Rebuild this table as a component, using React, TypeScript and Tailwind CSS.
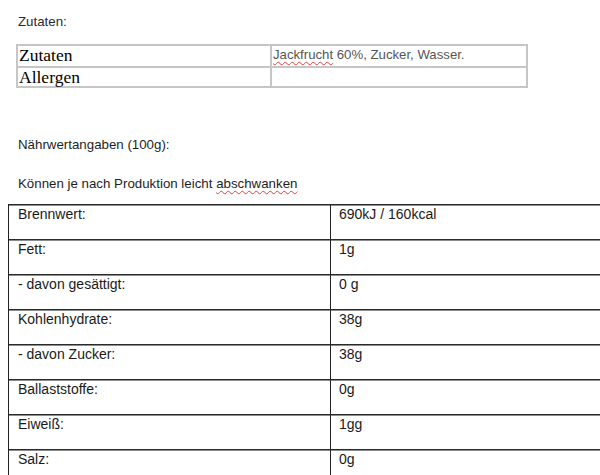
const naehrwerte = [
  { label: "Brennwert:", value: "690kJ / 160kcal" },
  { label: "Fett:", value: "1g" },
  { label: "- davon gesättigt:", value: "0 g" },
  { label: "Kohlenhydrate:", value: "38g" },
  { label: "- davon Zucker:", value: "38g" },
  { label: "Ballaststoffe:", value: "0g" },
  { label: "Eiweiß:", value: "1gg" },
  { label: "Salz:", value: "0g" },
];

const arial = "font-['Liberation_Sans',Arial,sans-serif]";
const times = "font-['Liberation_Serif','Times_New_Roman',serif]";

export default function App() {
  return (
    <div className={`w-[600px] h-[475px] bg-white overflow-hidden ${arial}`}>
      <p className="pl-[18px] pt-[14px] text-[13.3px] leading-[16px] text-[#2b2b2b]">Zutaten:</p>

      {/* Zutaten / Allergen */}
      <div className="ml-[16px] mt-[14px] w-[512px] border-2 border-[#c6c6c6]">
        <div className="grid grid-cols-[254px_1fr] h-[20px]">
          <div className={`${times} text-[17.5px] leading-[18px] text-black pl-[1px] border-r-2 border-[#c6c6c6]`}>
            Zutaten
          </div>
          <div className="text-[13.2px] leading-[18px] text-[#555] pl-[1px]">
            <span className="underline decoration-wavy decoration-[#e04040] decoration-1 underline-offset-2">Jackfrucht</span> 60%, Zucker, Wasser.
          </div>
        </div>
        <div className="grid grid-cols-[254px_1fr] h-[20px] border-t-2 border-[#c6c6c6]">
          <div className={`${times} text-[17.5px] leading-[18px] text-black pl-[1px] border-r-2 border-[#c6c6c6]`}>
            Allergen
          </div>
          <div />
        </div>
      </div>

      <p className="pl-[18px] mt-[49px] text-[13.3px] leading-[16px] text-[#1e1e1e]">Nährwertangaben (100g):</p>
      <p className="pl-[18px] mt-[23px] text-[13.3px] leading-[16px] text-[#1e1e1e]">
        Können je nach Produktion leicht{" "}
        <span className="underline decoration-wavy decoration-[#e04040] decoration-1 underline-offset-2">abschwanken</span>
      </p>

      {/* Nährwerttabelle */}
      <div className="ml-[8px] mt-[12px] w-[640px] border-l border-[#222]">
        {naehrwerte.map((r) => (
          <div
            key={r.label}
            className="grid grid-cols-[322px_1fr] h-[35px] border-t border-[#2a2a2a] shadow-[inset_0_1px_0_#8c8c8c]"
          >
            <div className="pl-[9px] pt-[1px] text-[14px] leading-[16px] text-[#1a1a1a] border-r border-[#222]">
              {r.label}
            </div>
            <div className="pl-[8px] pt-[1px] text-[14px] leading-[16px] text-[#1a1a1a]">{r.value}</div>
          </div>
        ))}
      </div>
    </div>
  );
}
